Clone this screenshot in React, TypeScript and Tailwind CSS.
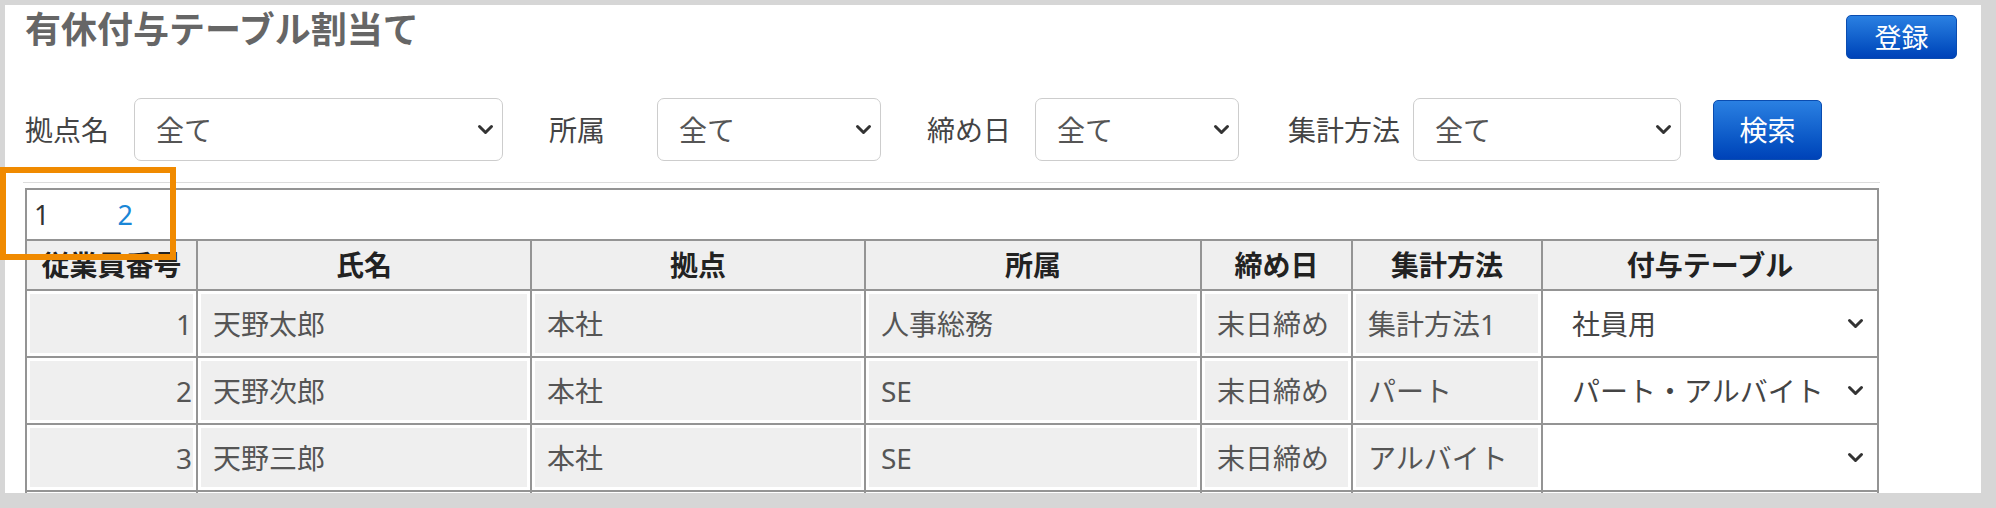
import React from "react";

const Chevron = () => (
  <svg width="17" height="11" viewBox="0 0 17 11" className="shrink-0">
    <path d="M2.5 2.5l6 6 6-6" fill="none" stroke="#333" strokeWidth="3" strokeLinecap="round" strokeLinejoin="round" />
  </svg>
);

const Select = ({ w }: { w: string }) => (
  <div className={`${w} h-[63px] shrink-0 flex items-center justify-between pl-[21px] pr-[8px] border border-[#cdcdcd] rounded-[7px] bg-white text-[28px] text-[#555] leading-none`}>
    <span>全て</span>
    <Chevron />
  </div>
);

const rows = [
  ["1", "天野太郎", "本社", "人事総務", "末日締め", "集計方法1", "社員用"],
  ["2", "天野次郎", "本社", "SE", "末日締め", "パート", "パート・アルバイト"],
  ["3", "天野三郎", "本社", "SE", "末日締め", "アルバイト", ""],
  ["", "", "", "", "", "", ""],
];

const headers = ["従業員番号", "氏名", "拠点", "所属", "締め日", "集計方法", "付与テーブル"];

export default function App() {
  return (
    <div className="relative w-[1996px] h-[508px] bg-[#d6d6d6] pt-[5px] pl-[5px] overflow-hidden font-['Noto_Sans','Noto_Sans_CJK_JP',sans-serif]">
      <div className="w-[1976px] h-[488px] bg-white overflow-hidden pl-[18px] pt-[5px]">
        {/* header */}
        <div className="flex justify-between items-start h-[49px] pr-[24px]">
          <h1 className="ml-[2px] h-[40px] leading-[40px] text-[36px] font-bold text-[#666]">有休付与テーブル割当て</h1>
          <button className="mt-[5px] w-[111px] h-[44px] rounded-[5px] border border-[#0a4cb0] bg-linear-to-b from-[#2a80e2] to-[#0042b8] text-white text-[27px] leading-none">
            登録
          </button>
        </div>

        {/* filters */}
        <div className="mt-[39px] w-[1857px] pb-[21px] border-b border-[#dcdcdc]">
          <div className="flex items-center h-[63px] pl-[2px] text-[28px] text-[#444] leading-none">
            <span className="w-[109px] shrink-0">拠点名</span>
            <Select w="w-[369px]" />
            <span className="w-[154px] shrink-0 pl-[46px]">所属</span>
            <Select w="w-[224px]" />
            <span className="w-[154px] shrink-0 pl-[46px]">締め日</span>
            <Select w="w-[204px]" />
            <span className="w-[174px] shrink-0 pl-[49px]">集計方法</span>
            <Select w="w-[268px]" />
            <button className="ml-[32px] w-[109px] h-[60px] rounded-[5px] border border-[#0a4cb0] bg-linear-to-b from-[#2a80e2] to-[#0042b8] text-white text-[28px] leading-none">
              検索
            </button>
          </div>
        </div>

        {/* table */}
        <table className="table-fixed border-collapse w-[1852px] ml-[2px] mt-[5px]">
          <colgroup>
            <col className="w-[171px]" />
            <col className="w-[334px]" />
            <col className="w-[334px]" />
            <col className="w-[336px]" />
            <col className="w-[151px]" />
            <col className="w-[190px]" />
            <col className="w-[336px]" />
          </colgroup>
          <tbody>
            <tr>
              <td colSpan={7} className="border-2 border-[#949494] p-0">
                <div className="flex items-center h-[49px] pl-[7px] text-[27px] leading-none text-[#333]">
                  <span>1</span>
                  <span className="ml-[68px] text-[#1a86d6]">2</span>
                </div>
              </td>
            </tr>
            <tr>
              {headers.map((h) => (
                <th key={h} className="border-2 border-[#949494] bg-[#efefef] p-0">
                  <div className="h-[48px] flex items-center justify-center text-[28px] font-bold text-[#222] leading-none whitespace-nowrap">
                    {h}
                  </div>
                </th>
              ))}
            </tr>
            {rows.map((r, i) => (
              <tr key={i}>
                {r.map((c, j) =>
                  j === 6 ? (
                    <td key={j} className="border-2 border-[#949494] p-[3px] bg-white">
                      <div className="h-[59px] flex items-center justify-between pl-[26px] pr-[10px] text-[28px] text-[#444] leading-none whitespace-nowrap">
                        <span>{c}</span>
                        <Chevron />
                      </div>
                    </td>
                  ) : (
                    <td key={j} className="border-2 border-[#949494] p-[3px] bg-white">
                      <div
                        className={
                          j === 0
                            ? "h-[59px] flex items-center justify-end pr-[1px] bg-[#efefef] text-[28px] text-[#555] leading-none"
                            : "h-[59px] flex items-center pl-[12px] bg-[#efefef] text-[28px] text-[#555] leading-none whitespace-nowrap"
                        }
                      >
                        {c}
                      </div>
                    </td>
                  )
                )}
              </tr>
            ))}
          </tbody>
        </table>
      </div>

      {/* annotation overlay */}
      <div className="absolute left-0 top-[167px] w-[176px] h-[93px] border-[6px] border-[#f08a00] pointer-events-none" />
    </div>
  );
}
